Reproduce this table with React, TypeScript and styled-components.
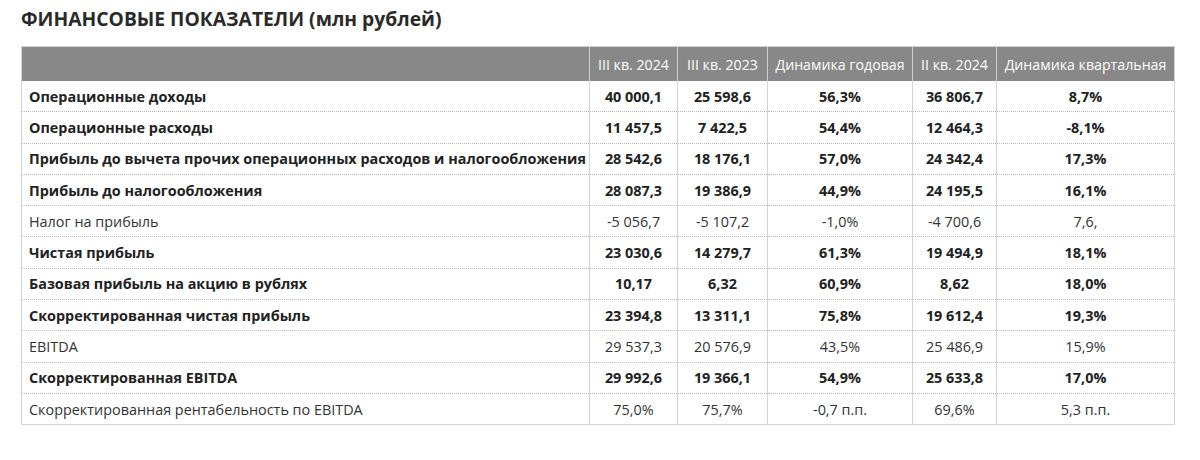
import React from "react";
import styled, { createGlobalStyle } from "styled-components";

const Global = createGlobalStyle`
  html, body { margin: 0; padding: 0; background: #fff; }
  body { font-family: "Open Sans", "Noto Sans", sans-serif; color: #222; }
`;

const Page = styled.div`
  padding: 6px 26px 0 21px;
  width: 1200px;
  box-sizing: border-box;
`;

const Title = styled.h1`
  margin: 0 0 14px 0;
  font-size: 19.3px;
  line-height: 26px;
  font-weight: 700;
  color: #2a2a2a;
`;

const Table = styled.table`
  border-collapse: collapse;
  width: 1153px;
  table-layout: fixed;
  border: 1px solid #d4d4d4;
`;

const Col = styled.col<{ $w: number }>`
  width: ${(p) => p.$w}px;
`;

const HeadCell = styled.th`
  background: #888888;
  color: #fff;
  font-weight: 400;
  font-size: 14.2px;
  height: 34px;
  padding: 0;
  text-align: center;
  white-space: nowrap;
  border-left: 1px solid #cfcfcf;
  &:first-child { border-left: none; }
`;

const Row = styled.tr`
  border-bottom: 1px dotted #bdbdbd;
  &:last-child { border-bottom: none; }
`;

const Cell = styled.td<{ $bold: boolean; $label?: boolean }>`
  height: 30.3px;
  padding: 0 0 0 ${(p) => (p.$label ? "7px" : "0")};
  font-size: 14.4px;
  font-weight: ${(p) => (p.$bold ? 700 : 400)};
  color: ${(p) => (p.$bold ? "#222" : "#333")};
  text-align: ${(p) => (p.$label ? "left" : "center")};
  white-space: nowrap;
  overflow: hidden;
  border-left: 1px solid #d4d4d4;
  &:first-child { border-left: none; }
`;

const widths = [568, 88, 90, 145, 84, 178];
const heads = ["", "III кв. 2024", "III кв. 2023", "Динамика годовая", "II кв. 2024", "Динамика квартальная"];

const rows: { bold: boolean; cells: string[] }[] = [
  { bold: true, cells: ["Операционные доходы", "40 000,1", "25 598,6", "56,3%", "36 806,7", "8,7%"] },
  { bold: true, cells: ["Операционные расходы", "11 457,5", "7 422,5", "54,4%", "12 464,3", "-8,1%"] },
  { bold: true, cells: ["Прибыль до вычета прочих операционных расходов и налогообложения", "28 542,6", "18 176,1", "57,0%", "24 342,4", "17,3%"] },
  { bold: true, cells: ["Прибыль до налогообложения", "28 087,3", "19 386,9", "44,9%", "24 195,5", "16,1%"] },
  { bold: false, cells: ["Налог на прибыль", "-5 056,7", "-5 107,2", "-1,0%", "-4 700,6", "7,6,"] },
  { bold: true, cells: ["Чистая прибыль", "23 030,6", "14 279,7", "61,3%", "19 494,9", "18,1%"] },
  { bold: true, cells: ["Базовая прибыль на акцию в рублях", "10,17", "6,32", "60,9%", "8,62", "18,0%"] },
  { bold: true, cells: ["Скорректированная чистая прибыль", "23 394,8", "13 311,1", "75,8%", "19 612,4", "19,3%"] },
  { bold: false, cells: ["EBITDA", "29 537,3", "20 576,9", "43,5%", "25 486,9", "15,9%"] },
  { bold: true, cells: ["Скорректированная EBITDA", "29 992,6", "19 366,1", "54,9%", "25 633,8", "17,0%"] },
  { bold: false, cells: ["Скорректированная рентабельность по EBITDA", "75,0%", "75,7%", "-0,7 п.п.", "69,6%", "5,3 п.п."] },
];

export default function App() {
  return (
    <Page>
      <Global />
      <Title>ФИНАНСОВЫЕ ПОКАЗАТЕЛИ (млн рублей)</Title>
      <Table>
        <colgroup>
          {widths.map((w, i) => (
            <Col key={i} $w={w} />
          ))}
        </colgroup>
        <thead>
          <tr>
            {heads.map((h, i) => (
              <HeadCell key={i}>{h}</HeadCell>
            ))}
          </tr>
        </thead>
        <tbody>
          {rows.map((r, i) => (
            <Row key={i}>
              {r.cells.map((c, j) => (
                <Cell key={j} $bold={r.bold} $label={j === 0}>{c}</Cell>
              ))}
            </Row>
          ))}
        </tbody>
      </Table>
    </Page>
  );
}
